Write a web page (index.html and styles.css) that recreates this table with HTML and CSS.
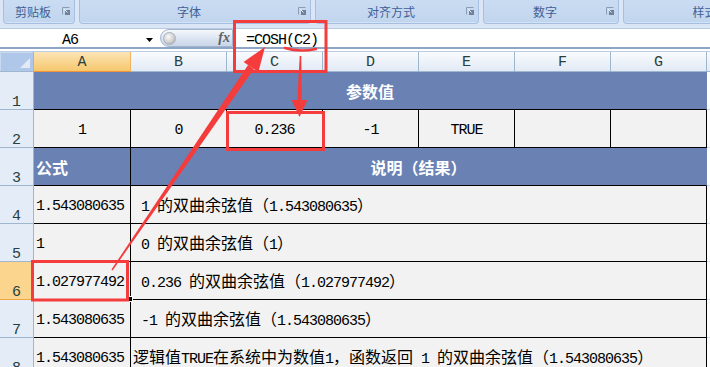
FILE: index.html
```html
<!DOCTYPE html>
<html lang="zh">
<head>
<meta charset="utf-8">
<title>COSH</title>
<link rel="stylesheet" href="styles.css">
</head>
<body>
<div class="app">
  <div class="ribbon">
    <div class="group g1"><span class="glabel">剪贴板</span><svg class="launcher" viewBox="0 0 8 8"><path d="M0.5 7.5V0.5H7.5" fill="none" stroke="#8c9cb2"/><rect x="3" y="3" width="5" height="5" fill="#6f819b"/><path d="M2 2L5.5 5.5" stroke="#eef3fa" stroke-width="1"/></svg></div>
    <div class="group g2"><span class="glabel">字体</span><svg class="launcher" viewBox="0 0 8 8"><path d="M0.5 7.5V0.5H7.5" fill="none" stroke="#8c9cb2"/><rect x="3" y="3" width="5" height="5" fill="#6f819b"/><path d="M2 2L5.5 5.5" stroke="#eef3fa" stroke-width="1"/></svg></div>
    <div class="group g3"><span class="glabel">对齐方式</span><svg class="launcher" viewBox="0 0 8 8"><path d="M0.5 7.5V0.5H7.5" fill="none" stroke="#8c9cb2"/><rect x="3" y="3" width="5" height="5" fill="#6f819b"/><path d="M2 2L5.5 5.5" stroke="#eef3fa" stroke-width="1"/></svg></div>
    <div class="group g4"><span class="glabel">数字</span><svg class="launcher" viewBox="0 0 8 8"><path d="M0.5 7.5V0.5H7.5" fill="none" stroke="#8c9cb2"/><rect x="3" y="3" width="5" height="5" fill="#6f819b"/><path d="M2 2L5.5 5.5" stroke="#eef3fa" stroke-width="1"/></svg></div>
    <div class="group g5"><span class="glabel">样式</span><svg class="launcher" viewBox="0 0 8 8"><path d="M0.5 7.5V0.5H7.5" fill="none" stroke="#8c9cb2"/><rect x="3" y="3" width="5" height="5" fill="#6f819b"/><path d="M2 2L5.5 5.5" stroke="#eef3fa" stroke-width="1"/></svg></div>
  </div>

  <div class="fbar">
    <div class="namebox"><span class="nb-text">A6</span><svg class="dd" viewBox="0 0 7 4"><path d="M0 0H7L3.5 4Z" fill="#000"/></svg></div>
    <div class="fxbtn"><span class="knob"></span><span class="fx">fx</span></div>
    <div class="finput">=COSH(C2)</div>
  </div>
  <div class="fgap"></div>

  <div class="sheet">
    <div class="corner"><svg class="tri" viewBox="0 0 10 10"><path d="M10 0V10H0Z" fill="#e3eaf4"/></svg></div>
    <div class="ch ch-sel">A</div>
    <div class="ch">B</div>
    <div class="ch">C</div>
    <div class="ch">D</div>
    <div class="ch">E</div>
    <div class="ch">F</div>
    <div class="ch">G</div>
    <div class="ch ch-fill"></div>

    <div class="rh">1</div>
    <div class="cell head span7 center noedge">参数值</div>
    <div class="pad"></div>

    <div class="rh">2</div>
    <div class="cell val center">1</div>
    <div class="cell val center">0</div>
    <div class="cell val center">0.236</div>
    <div class="cell val center">-1</div>
    <div class="cell val center">TRUE</div>
    <div class="cell val center"></div>
    <div class="cell val center"></div>
    <div class="pad"></div>

    <div class="rh">3</div>
    <div class="cell head left">公式</div>
    <div class="cell head span6 center noedge">说明（结果）</div>
    <div class="pad"></div>

    <div class="rh">4</div>
    <div class="cell val left">1.543080635</div>
    <div class="cell val span6 left"><span class="t"> 1 <span class="c">的双曲余弦值（</span>1.543080635<span class="c">）</span></span></div>
    <div class="pad"></div>

    <div class="rh">5</div>
    <div class="cell val left">1</div>
    <div class="cell val span6 left"><span class="t"> 0 <span class="c">的双曲余弦值（</span>1<span class="c">）</span></span></div>
    <div class="pad"></div>

    <div class="rh rh-sel">6</div>
    <div class="cell val left active">1.027977492<span class="handle"></span></div>
    <div class="cell val span6 left"><span class="t"> 0.236 <span class="c">的双曲余弦值（</span>1.027977492<span class="c">）</span></span></div>
    <div class="pad"></div>

    <div class="rh">7</div>
    <div class="cell val left">1.543080635</div>
    <div class="cell val span6 left"><span class="t"> -1 <span class="c">的双曲余弦值（</span>1.543080635<span class="c">）</span></span></div>
    <div class="pad"></div>

    <div class="rh">8</div>
    <div class="cell val left">1.543080635</div>
    <div class="cell val span6 left"><span class="t"><span class="c">逻辑值</span>TRUE<span class="c">在系统中为数值</span>1<span class="c">，函数返回</span> 1 <span class="c">的双曲余弦值（</span>1.543080635<span class="c">）</span></span></div>
    <div class="pad"></div>
  </div>

  <svg class="marks" width="710" height="367" viewBox="0 0 710 367">
    <g fill="none" stroke="#f43c3c" stroke-width="3">
      <rect x="234.5" y="21.5" width="91.5" height="50"/>
      <rect x="227.5" y="112.5" width="96" height="37"/>
      <rect x="32.5" y="261.5" width="95" height="38.5"/>
      <path d="M285 48 Q299 52.5 316 49" stroke-width="2.5" stroke-linecap="round"/>
    </g>
    <g fill="#f43c3c">
      <polygon points="111.4,269.6 248.1,65 253.9,69 112.6,270.4"/>
      <polygon points="265,47 243.6,61.9 258.4,72.1"/>
      <polygon points="299.7,56 301.3,56 301.7,101 297.3,101"/>
      <polygon points="291.5,100 307.5,100 299.5,117"/>
    </g>
  </svg>
</div>
</body>
</html>
```

FILE: styles.css
```css
* { box-sizing: border-box; margin: 0; padding: 0; }
html, body { width: 710px; height: 367px; overflow: hidden; background: #fff; }
body { font-family: "Liberation Mono", "Noto Sans CJK SC", monospace; }

.app { position: relative; width: 710px; height: 367px; overflow: hidden; }

/* ribbon */
.ribbon {
  height: 28px;
  background: #dae6f5;
  display: flex;
  gap: 4px;
  padding-left: 3px;
  overflow: hidden;
}
.group {
  flex: none;
  height: 24px;
  display: flex;
  align-items: center;
  background: linear-gradient(#cadcf2, #c1d5ee);
  border: 1px solid #a4bfe2;
  border-top: none;
  border-radius: 0 0 4px 4px;
  box-shadow: inset 0 -1px 0 #d3e2f5;
}
.g1 { width: 72px; }
.g2 { width: 232px; }
.g3 { width: 164px; }
.g4 { width: 136px; }
.g5 { width: 175px; }
.glabel {
  flex: 1;
  text-align: center;
  font: 12px/16px "Noto Sans CJK SC", sans-serif;
  color: #3f5f95;
  padding-top: 1px;
}
.launcher {
  flex: none;
  width: 8px;
  height: 8px;
  align-self: flex-start;
  margin: 7px 4px 0 0;
}

/* formula bar */
.fbar {
  height: 21px;
  display: flex;
  align-items: flex-start;
  background: #fff;
  border-top: 1px solid #b9cbe3;
  border-bottom: 2px solid #8ea5c5;
}
.namebox { width: 157px; display: flex; align-items: flex-start; }
.nb-text {
  width: 140px;
  text-align: center;
  font-size: 15px;
  line-height: 15px;
  letter-spacing: -1px;
  padding-top: 4px;
  color: #000;
}
.dd { width: 7px; height: 4px; margin: 9px 0 0 6px; }
.fxbtn {
  margin-left: 3px;
  width: 73px;
  height: 18px;
  display: flex;
  align-items: center;
  border: 1px solid #a3b5ce;
  border-radius: 9px 0 0 9px;
  background: linear-gradient(#f5f8fc, #dae4f1 55%, #c9d6e8);
}
.knob {
  width: 13px;
  height: 13px;
  margin-left: 2px;
  border-radius: 50%;
  background: radial-gradient(circle at 40% 35%, #fafafa, #d0d0d0 55%, #9c9c9c);
  border: 1px solid #a8b0bb;
}
.fx {
  margin-left: auto;
  padding-right: 2px;
  font: italic bold 14px/16px "Liberation Serif", serif;
  color: #606060;
}
.finput {
  margin-left: 3px;
  padding-left: 10px;
  font-size: 15px;
  line-height: 15px;
  letter-spacing: -1px;
  padding-top: 4px;
  color: #000;
}
.fgap { height: 3px; background: #fff; border-bottom: 1px solid #bdcde3; }

/* sheet */
.sheet {
  display: grid;
  grid-template-columns: 34px 97px repeat(6, 96px) 3px;
  grid-template-rows: 20px repeat(8, 38px);
}
.corner {
  display: flex;
  justify-content: flex-end;
  align-items: flex-end;
  padding: 0 3px 3px 0;
  background: #afc7e9;
  border-right: 1px solid #9eb6ce;
  border-bottom: 1px solid #9eb6ce;
  box-shadow: inset 1px 1px 0 #c9d9ef;
}
.tri { width: 10px; height: 10px; }
.ch {
  display: flex;
  justify-content: center;
  align-items: center;
  padding-top: 2px;
  background: linear-gradient(#f9fbfe, #e2eaf5);
  border-right: 1px solid #9eb6ce;
  border-bottom: 1px solid #9eb6ce;
  font-size: 15px;
  color: #27403d;
}
.ch-sel {
  background: linear-gradient(#fbe4b6, #f6c76d);
  border-right-color: #f2b35f;
  border-bottom-color: #f29436;
}
.ch-fill { border-right: none; }
.rh {
  display: flex;
  justify-content: center;
  align-items: flex-end;
  line-height: 12px;
  font-size: 15px;
  color: #27403d;
  background: #e4ecf7;
  border-right: 1px solid #9eb6ce;
  border-bottom: 1px solid #9eb6ce;
}
.rh-sel {
  background: #fbd48e;
  border-right-color: #f2b35f;
  border-bottom-color: #eea647;
}
.pad { background: #fff; border-bottom: 1px solid #d5dce6; }

.cell {
  display: flex;
  align-items: center;
  border-right: 1px solid #000;
  border-bottom: 1px solid #000;
  white-space: pre;
  overflow: hidden;
}
.span7 { grid-column: span 7; }
.span6 { grid-column: span 6; }
.center { justify-content: center; }
.left { padding-left: 2px; }
.head {
  background: #6a81b4;
  color: #fff;
  font: bold 16px/20px "Noto Sans CJK SC", sans-serif;
}
.noedge { border-right-color: #6a81b4; }
.val {
  background: #f2f2f2;
  color: #000;
  font-size: 15px;
  line-height: 17px;
  letter-spacing: -1px;
  padding-top: 3px;
}
.c {
  font-family: "Noto Sans CJK SC", sans-serif;
  font-size: 16px;
  letter-spacing: 0;
}
.active { position: relative; overflow: visible; }
.handle {
  position: absolute;
  left: 93px;
  top: 34px;
  width: 6px;
  height: 6px;
  background: #000;
  border: 1px solid #fff;
  z-index: 2;
}

.marks { position: absolute; left: 0; top: 0; pointer-events: none; z-index: 5; }
```
